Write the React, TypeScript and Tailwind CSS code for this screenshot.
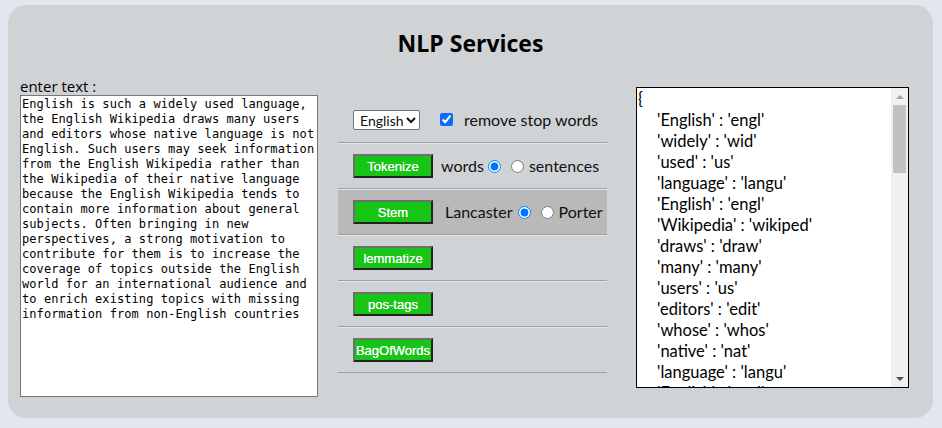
import React from "react";

const leftLines = [
  "English is such a widely used language,",
  "the English Wikipedia draws many users",
  "and editors whose native language is not",
  "English. Such users may seek information",
  "from the English Wikipedia rather than",
  "the Wikipedia of their native language",
  "because the English Wikipedia tends to",
  "contain more information about general",
  "subjects. Often bringing in new",
  "perspectives, a strong motivation to",
  "contribute for them is to increase the",
  "coverage of topics outside the English",
  "world for an international audience and",
  "to enrich existing topics with missing",
  "information from non-English countries",
];

const pairs: [string, string][] = [
  ["English", "engl"],
  ["widely", "wid"],
  ["used", "us"],
  ["language", "langu"],
  ["English", "engl"],
  ["Wikipedia", "wikiped"],
  ["draws", "draw"],
  ["many", "many"],
  ["users", "us"],
  ["editors", "edit"],
  ["whose", "whos"],
  ["native", "nat"],
  ["language", "langu"],
  ["English", "engl"],
];

function GreenButton({ label }: { label: string }) {
  return (
    <button
      className="w-[80px] h-[24px] shrink-0 bg-[#17c517] text-white text-[13px] leading-none flex items-center justify-center border-2 border-t-[#6f6f6f] border-l-[#6f6f6f] border-r-[#222] border-b-[#222] whitespace-nowrap overflow-hidden [text-shadow:0_0_0.6px_#fff]"
      style={{ fontFamily: "'Liberation Sans', Arial, sans-serif" }}
    >
      {label}
    </button>
  );
}

function Row({ children, dark, first }: { children?: React.ReactNode; dark?: boolean; first?: boolean }) {
  return (
    <div
      className={
        "h-[46px] flex items-center pl-[15px] border-b border-b-[#a0a0a0] " +
        (first ? "" : "border-t border-t-[#e6e6e6] ") +
        (dark ? "bg-[#b9b9ba]" : "")
      }
    >
      {children}
    </div>
  );
}

export default function App() {
  const sans = { fontFamily: "'Open Sans', 'Noto Sans', Arial, sans-serif" };
  const lato = { fontFamily: "Lato, 'Open Sans', Arial, sans-serif" };
  return (
    <div className="w-[942px] h-[428px] bg-[#e2e6ee] pt-[5px] pl-[8px]" style={sans}>
      <div className="w-[925px] h-[413px] bg-[#d0d3d6] rounded-[18px] px-[12px]">
        <h1 className="text-center text-[23px] font-bold text-black pt-[23px] h-[72px] leading-[30px]">
          NLP Services
        </h1>
        <div className="flex">
          <div className="w-[298px]">
            <div className="text-[15px] leading-[18px] text-black h-[18px]">enter text :</div>
            <div
              className="w-[298px] h-[302px] bg-white border border-[#767676] pl-[1px] pt-[1px] text-[12px] leading-[15px] text-black whitespace-pre overflow-hidden"
              style={{ fontFamily: "'DejaVu Sans Mono', 'Liberation Mono', monospace", letterSpacing: "0.08px" }}
            >
              {leftLines.map((l, i) => (
                <div key={i}>{l}</div>
              ))}
            </div>
          </div>
          <div className="w-[269px] ml-[20px] mt-[20px] text-[16px] text-[#111]" style={lato}>
            <Row first>
              <select
                className="w-[67px] h-[20px] bg-white border border-[#767676] rounded-[2px] text-[14px] leading-none pl-[2px]"
                defaultValue="English"
                style={lato}
              >
                <option>English</option>
              </select>
              <input type="checkbox" defaultChecked className="ml-[20px] w-[13px] h-[13px] accent-[#0b6cf5]" />
              <span className="ml-[11px]">remove stop words</span>
            </Row>
            <Row>
              <GreenButton label="Tokenize" />
              <span className="ml-[8px]">words</span>
              <input type="radio" name="tok" defaultChecked className="ml-[4px] w-[13px] h-[13px]" />
              <input type="radio" name="tok" className="ml-[10px] w-[13px] h-[13px]" />
              <span className="ml-[5px]">sentences</span>
            </Row>
            <Row dark>
              <GreenButton label="Stem" />
              <span className="ml-[12px]">Lancaster</span>
              <input type="radio" name="stem" defaultChecked className="ml-[5px] w-[13px] h-[13px]" />
              <input type="radio" name="stem" className="ml-[10px] w-[13px] h-[13px]" />
              <span className="ml-[5px]">Porter</span>
            </Row>
            <Row>
              <GreenButton label="lemmatize" />
            </Row>
            <Row>
              <GreenButton label="pos-tags" />
            </Row>
            <Row>
              <GreenButton label="BagOfWords" />
            </Row>
          </div>
          <div className="w-[273px] ml-[29px] mt-[10px] h-[301px] bg-white border border-black flex">
            <div className="flex-1 overflow-hidden pl-[1px] pt-[1px] text-[16.5px] leading-[21px] text-black" style={lato}>
              <div>{"{"}</div>
              {pairs.map(([a, b], i) => (
                <div key={i} className="pl-[19px] whitespace-nowrap">
                  '{a}' : '{b}'
                </div>
              ))}
            </div>
            <div className="w-[17px] bg-[#f0f0f0] flex flex-col items-center">
              <div className="h-[17px] flex items-center justify-center">
                <div className="w-0 h-0 border-l-[4px] border-r-[4px] border-b-[4px] border-l-transparent border-r-transparent border-b-[#a3a3a3]" />
              </div>
              <div className="w-[13px] h-[68px] bg-[#c1c1c1]" />
              <div className="flex-1" />
              <div className="h-[17px] flex items-center justify-center">
                <div className="w-0 h-0 border-l-[4px] border-r-[4px] border-t-[4px] border-l-transparent border-r-transparent border-t-[#505050]" />
              </div>
            </div>
          </div>
        </div>
      </div>
    </div>
  );
}
